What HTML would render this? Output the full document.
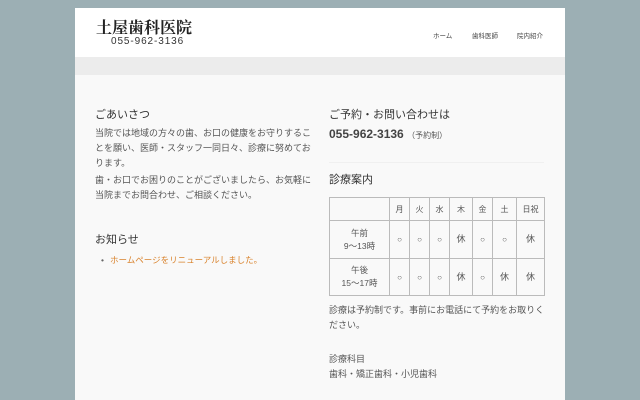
<!DOCTYPE html>
<html><head><meta charset="utf-8"><style>
*{margin:0;padding:0;box-sizing:border-box}
body{width:640px;height:400px;overflow:hidden;background:#9cafb4;font-family:"Liberation Sans","Noto Sans CJK JP",sans-serif;color:#555;position:relative}
.a{position:absolute;white-space:nowrap}
#card{position:absolute;left:75px;top:8px;width:490px;height:392px;background:#f9f9f9}
#hdr{position:absolute;left:0;top:0;width:490px;height:49px;background:#fff}
#band{position:absolute;left:0;top:49px;width:490px;height:18px;background:#ececec}
.h{font-size:11px;color:#333}
.p{font-size:9px;line-height:15px;color:#555}
table{position:absolute;left:329px;top:197px;border-collapse:collapse;font-size:8px;color:#555}
td{border:1px solid #bbb;text-align:center;padding:0;line-height:13px}
.sep{position:absolute;height:1px;background:#f0f0f0}
</style></head><body>
<div id="card"><div id="hdr"></div><div id="band"></div></div>
<div class="a" style="left:96px;top:15px;font-size:16px;font-weight:bold;color:#222;font-family:'Noto Serif CJK SC',serif">土屋歯科医院</div>
<div class="a" style="left:111px;top:36px;font-size:10px;color:#333;letter-spacing:0.9px">055-962-3136</div>
<div class="a" style="left:433px;top:30px;font-size:6.5px;color:#444">ホーム</div>
<div class="a" style="left:472px;top:30px;font-size:6.5px;color:#444">歯科医師</div>
<div class="a" style="left:517px;top:30px;font-size:6.5px;color:#444">院内紹介</div>

<div class="a h" style="left:95px;top:106px">ごあいさつ</div>
<div class="a p" style="left:95px;top:126px;width:222px;white-space:normal">当院では地域の方々の歯、お口の健康をお守りすることを願い、医師・スタッフ一同日々、診療に努めております。</div>
<div class="a p" style="left:95px;top:173px;width:222px;white-space:normal">歯・お口でお困りのことがございましたら、お気軽に当院までお問合わせ、ご相談ください。</div>
<div class="a h" style="left:95px;top:231px">お知らせ</div>
<div class="a" style="left:101px;top:255px;font-size:8.5px;color:#666">•</div>
<div class="a" style="left:110px;top:254px;font-size:8.5px;color:#d9822b">ホームページをリニューアルしました。</div>

<div class="a h" style="left:329px;top:106px">ご予約・お問い合わせは</div>
<div class="a" style="left:329px;top:127px;font-size:12px;font-weight:bold;color:#444">055-962-3136 <span style="font-size:8px;font-weight:normal;color:#555">（予約制）</span></div>
<div class="sep" style="left:329px;top:162px;width:215px"></div>
<div class="a h" style="left:329px;top:171px">診療案内</div>
<table>
<tr style="height:23px"><td style="width:60px"></td><td style="width:20px">月</td><td style="width:20px">火</td><td style="width:20px">水</td><td style="width:23px">木</td><td style="width:20px">金</td><td style="width:24px">土</td><td style="width:28px">日祝</td></tr>
<tr style="height:38px"><td style="font-size:8.5px">午前<br>9〜13時</td><td>○</td><td>○</td><td>○</td><td style="font-size:9px">休</td><td>○</td><td>○</td><td style="font-size:9px">休</td></tr>
<tr style="height:37px"><td style="font-size:8.5px">午後<br>15〜17時</td><td>○</td><td>○</td><td>○</td><td style="font-size:9px">休</td><td>○</td><td style="font-size:9px">休</td><td style="font-size:9px">休</td></tr>
</table>
<div class="a p" style="left:329px;top:303px;width:222px;white-space:normal">診療は予約制です。事前にお電話にて予約をお取りください。</div>
<div class="a p" style="left:329px;top:352px">診療科目</div>
<div class="a p" style="left:329px;top:367px">歯科・矯正歯科・小児歯科</div>
</body></html>
